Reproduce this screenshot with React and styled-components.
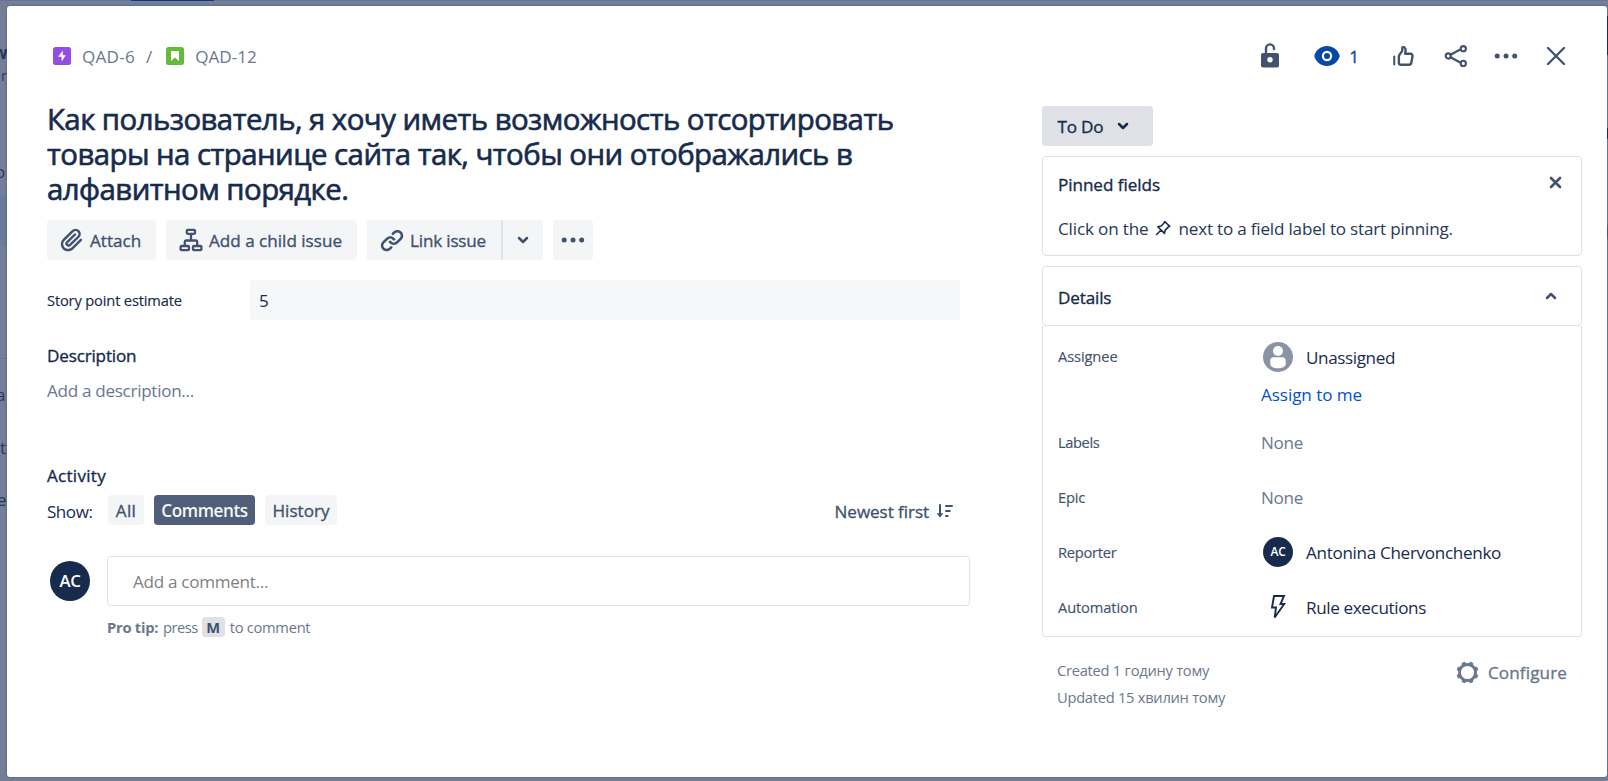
import React from "react";
import styled, { createGlobalStyle } from "styled-components";

const color = {
  navy: "#172b4d",
  slate: "#42526e",
  mute: "#6b778c",
  line: "#dfe1e6",
  chip: "#f4f5f7",
  link: "#0052cc",
};

const GlobalStyle = createGlobalStyle`
  * { box-sizing: border-box; }
  body {
    margin: 0;
    overflow: hidden;
    font-family: "Open Sans", "Noto Sans", sans-serif;
    font-size: 17.1px;
    line-height: 24px;
    color: ${color.navy};
  }
`;

/* ---------- shell ---------- */

const Screen = styled.div`
  display: grid;
  grid-template-columns: 7px 1600px 1px;
  grid-template-rows: 6px 771px 4px;
  width: 1608px;
  height: 781px;
  background: #737f98;
`;

const TopStrip = styled.div`
  grid-column: 1 / -1;
  display: flex;
  align-items: flex-start;
  padding-left: 131px;
  border-top: 1px solid #67748e;
`;

const ActiveTab = styled.div`
  width: 83px;
  height: 1px;
  margin-top: -1px;
  background: #0a3a8a;
`;

const Board = styled.div`
  overflow: hidden;
  padding-top: 37px;
  color: #27395a;
`;

const Peek = styled.div`
  height: 20px;
  line-height: 20px;
  width: 40px;
  margin-top: ${(p) => p.$gap || 0}px;
  margin-left: ${(p) => p.$shift || 0}px;
  font-weight: ${(p) => (p.$strong ? 700 : 400)};
  font-size: ${(p) => p.$size || 17}px;
`;

const Band = styled.div`
  height: 50px;
  margin-top: 14px;
  background: #687b98;
`;

const Rule = styled.div`
  height: 1px;
  margin-top: 112px;
  background: #67748e;
`;

const Edge = styled.div`
  padding-top: 10px;
  background: #67728d;
`;

const EdgeMark = styled.div`
  height: ${(p) => p.$h}px;
  margin-bottom: ${(p) => p.$after || 0}px;
  background: ${(p) => (p.$soft ? "#4c5976" : "#1b2d4c")};
`;

const Modal = styled.main`
  padding: 30px 25px 0 40px;
  background: #fff;
  border-radius: 3px;
  box-shadow: 0 0 3px rgba(9, 30, 66, 0.35);
`;

/* ---------- text ---------- */

const Text = styled.span`
  display: block;
  padding-top: ${(p) => (p.$small ? 0 : 2)}px;
  white-space: nowrap;
  color: ${(p) => p.$color || "inherit"};
  font-size: ${(p) => (p.$small ? 14.7 : 17.1)}px;
  letter-spacing: ${(p) => p.$ls || 0}px;
  -webkit-text-stroke: ${(p) => (p.$medium ? (p.$small ? 0.15 : 0.35) : 0)}px;
`;

const Bold = styled(Text)`
  font-weight: ${(p) => (p.$small ? 700 : 600)};
`;

const Title = styled.h1`
  margin: 0;
  padding-top: 1px;
  font-size: 29.4px;
  line-height: 35px;
  font-weight: 400;
  letter-spacing: -0.55px;
  white-space: nowrap;
  -webkit-text-stroke: 0.65px;
`;

/* ---------- header ---------- */

const Header = styled.header`
  display: flex;
  justify-content: space-between;
  align-items: center;
  height: 40px;
`;

const Crumbs = styled.nav`
  display: flex;
  align-items: center;
  padding-left: 6px;
  color: ${color.mute};
`;

const CrumbText = styled(Text)`
  margin: 0 ${(p) => p.$right || 0}px 0 ${(p) => p.$left || 0}px;
`;

const TypeTile = styled.span`
  display: grid;
  place-items: center;
  width: 18px;
  height: 18px;
  border-radius: 2.5px;
  background: ${(p) => p.$bg};
`;

const Actions = styled.div`
  display: flex;
  align-items: center;
  gap: 20px;
  padding-right: 11px;
  color: ${color.slate};
`;

const Watch = styled.div`
  display: flex;
  align-items: center;
  gap: 9px;
  margin: 0 9px 0 9px;
  color: #0747a6;
`;

const Vote = styled.div`
  display: flex;
  margin-right: 3px;
`;

/* ---------- columns ---------- */

const Columns = styled.div`
  display: grid;
  grid-template-columns: 923px 540px;
  justify-content: space-between;
  padding-top: 25px;
`;

const Toolbar = styled.div`
  display: flex;
  gap: 10px;
  margin-top: 13px;
`;

const ToolButton = styled.button`
  display: flex;
  align-items: center;
  gap: 3px;
  width: ${(p) => p.$w}px;
  height: 40px;
  padding: 0 0 0 ${(p) => (p.$center ? 0 : 10)}px;
  justify-content: ${(p) => (p.$center ? "center" : "flex-start")};
  border: 0;
  border-radius: ${(p) => p.$radius || "3.75px"};
  background: ${color.chip};
  color: ${color.slate};
  font: inherit;
`;

const SplitButton = styled.div`
  display: flex;
  gap: 2px;
  border-radius: 3.75px;
  background: ${color.line};
`;

const FieldRow = styled.div`
  display: flex;
  align-items: center;
  margin-top: 20px;
`;

const FieldLabel = styled.div`
  width: 203px;
`;

const FieldValue = styled.div`
  display: flex;
  align-items: center;
  width: 710px;
  height: 40px;
  padding-left: 9px;
  border-radius: 3.75px;
  background: #f6f7f9;
`;

const Section = styled.section`
  display: flex;
  flex-direction: column;
  gap: 9px;
  margin-top: 22px;
`;

const Activity = styled.section`
  margin-top: 59px;
`;

const FilterRow = styled.div`
  display: flex;
  align-items: center;
  height: 30px;
  margin-top: 7px;
`;

const FilterLabel = styled.div`
  width: 61px;
  padding-top: 2px;
`;

const Filter = styled.button`
  display: grid;
  place-items: center;
  width: ${(p) => p.$w}px;
  height: 30px;
  margin-right: 10px;
  padding: 0;
  border: 0;
  border-radius: 3.75px;
  background: ${(p) => (p.$on ? "#505f79" : color.chip)};
  color: ${(p) => (p.$on ? "#f4f5f7" : color.slate)};
  font: inherit;
`;

const Sort = styled.div`
  display: flex;
  align-items: center;
  gap: 7px;
  margin-left: auto;
  padding: 2px 17px 0 0;
  color: ${color.slate};
`;

const Composer = styled.div`
  display: flex;
  align-items: center;
  margin-top: 31px;
  padding-left: 3px;
`;

const Avatar = styled.span`
  display: grid;
  place-items: center;
  flex: none;
  width: ${(p) => p.$size}px;
  height: ${(p) => p.$size}px;
  border-radius: 50%;
  background: ${color.navy};
  color: #fff;
  font-weight: 600;
  font-size: ${(p) => p.$font}px;
  letter-spacing: -0.3px;
`;

const CommentBox = styled.div`
  display: flex;
  align-items: center;
  width: 863px;
  height: 50px;
  margin-left: 17px;
  padding-left: 25px;
  border: 1px solid ${color.line};
  border-radius: 3.75px;
`;

const Tip = styled.div`
  display: flex;
  align-items: center;
  height: 20px;
  margin: 11px 0 0 60px;
  color: ${color.mute};
`;

const TipLead = styled(Bold)`
  width: 56px;
`;

const Key = styled.kbd`
  display: grid;
  place-items: center;
  width: 23px;
  height: 20px;
  margin: 0 5px 0 4px;
  border-radius: 3.75px;
  background: ${color.line};
  color: ${color.slate};
  font: 700 14.7px/20px "Open Sans", sans-serif;
`;

const Side = styled.aside`
  padding-top: 5px;
`;

const Status = styled.button`
  display: flex;
  align-items: center;
  gap: 14px;
  width: 111px;
  height: 40px;
  padding: 0 0 0 15.5px;
  border: 0;
  border-radius: 3.75px;
  background: ${color.line};
  color: ${color.navy};
  font: inherit;
`;

const Pinned = styled.section`
  height: 100px;
  margin-top: 10px;
  padding: 14px 19px 0 15px;
  border: 1px solid ${color.line};
  border-radius: 4px;
`;

const PinnedHead = styled.div`
  display: flex;
  justify-content: space-between;
  align-items: center;
`;

const Dismiss = styled.span`
  display: flex;
  padding-bottom: 4px;
  color: ${color.slate};
`;

const PinnedHint = styled.div`
  display: flex;
  align-items: center;
  margin-top: 18px;
  color: #253858;
`;

const HintIcon = styled.span`
  display: flex;
  margin: 0 7px 0 7px;
  color: ${color.navy};
`;

const DetailsHead = styled.div`
  display: flex;
  justify-content: space-between;
  align-items: center;
  height: 60px;
  margin-top: 10px;
  padding: 2px 24px 0 15px;
  border: 1px solid ${color.line};
  border-radius: 4px;
`;

const Collapse = styled.span`
  display: flex;
  padding-bottom: 2px;
  color: ${color.slate};
`;

const DetailsBody = styled.div`
  height: 311px;
  padding-left: 15px;
  border: 1px solid ${color.line};
  border-top: 0;
  border-radius: 0 0 4px 4px;
`;

const DetailRow = styled.div`
  display: grid;
  grid-template-columns: 203px 1fr;
  align-items: ${(p) => (p.$tall ? "start" : "center")};
  height: ${(p) => (p.$tall ? 88 : 55)}px;
  padding-top: ${(p) => (p.$tall ? 16 : 0)}px;
`;

const DetailLabel = styled(Text)`
  line-height: ${(p) => (p.$tall ? 29 : 24)}px;
`;

const Person = styled.div`
  display: flex;
  align-items: center;
  gap: 13px;
  height: 30px;
  padding-left: 2px;
`;

const Assign = styled.a`
  display: block;
  margin-top: 9px;
  color: ${color.link};
`;

const Footer = styled.footer`
  display: flex;
  justify-content: space-between;
  align-items: flex-start;
  margin-top: 20px;
  padding: 0 15px;
  color: ${color.mute};
`;

const Dates = styled.div`
  line-height: 27px;
`;

const Configure = styled.div`
  display: flex;
  align-items: center;
  gap: 9px;
  height: 30px;
`;

/* ---------- icons ---------- */

const Icon = ({ w = 30, h = w, box, children }) => (
  <svg width={w} height={h} viewBox={box || `0 0 ${w} ${h}`} fill="none" stroke="currentColor" strokeLinecap="round" strokeLinejoin="round">
    {children}
  </svg>
);

const Unlock = () => (
  <Icon>
    <rect x="6" y="12" width="18" height="14.500" rx="2" fill="currentColor" stroke="none" />
    <path d="M11 11.500V7.400a4 4 0 0 1 8 0v.6" strokeWidth="2.400" />
    <circle cx="15" cy="18.800" r="2.700" fill="#fff" stroke="none" />
  </Icon>
);

const Eye = () => (
  <Icon w={26} h={20}>
    <path d="M13 0C7 0 2.600 3.600.7 8.400a4.200 4.200 0 0 0 0 3.200C2.600 16.400 7 20 13 20s10.400-3.600 12.300-8.400a4.200 4.200 0 0 0 0-3.200C23.400 3.600 19 0 13 0z" fill="currentColor" stroke="none" />
    <circle cx="13" cy="10" r="4.100" stroke="#fff" strokeWidth="2.200" />
  </Icon>
);

const Thumb = () => (
  <Icon box="0 0 24 24">
    <path d="M5 12.300v6.500" strokeWidth="1.600" />
    <path d="M8.700 17.500v-5c0-.6.2-1 .5-1.500l2.200-3.100V5.700c0-.7.9-1.100 1.700-.6.700.5 1.100 1.300 1 2.100l-.4 3h4.200c1.100 0 1.900.9 1.700 2l-.9 5c-.2 1.100-1 1.800-2 1.800h-6.100c-1.100 0-1.900-.6-1.900-1.500z" strokeWidth="1.900" />
  </Icon>
);

const Share = () => (
  <Icon>
    <path d="M9.500 13.700l9.300-4.900M9.500 16.300l9.300 5" strokeWidth="2.300" />
    <circle cx="7.300" cy="15" r="2.600" strokeWidth="2.100" />
    <circle cx="22.300" cy="7.700" r="2.600" strokeWidth="2.100" />
    <circle cx="22.300" cy="22.400" r="2.600" strokeWidth="2.100" />
  </Icon>
);

const Dots = () => (
  <Icon w={30} h={30}>
    <g fill="currentColor" stroke="none">
      <circle cx="6.200" cy="15" r="2.500" />
      <circle cx="15" cy="15" r="2.500" />
      <circle cx="23.700" cy="15" r="2.500" />
    </g>
  </Icon>
);

const Close = () => (
  <Icon>
    <path d="M7 7l16 16M23 7L7 23" strokeWidth="2.300" />
  </Icon>
);

const SmallClose = () => (
  <Icon w={13}>
    <path d="M2 2l9 9M11 2l-9 9" strokeWidth="2.600" />
  </Icon>
);

const Clip = () => (
  <Icon box="0 0 24 24">
    <path
      fill="currentColor"
      stroke="none"
      d="M11.643 17.965c-1.530 1.495-4.016 1.496-5.542.004a3.773 3.773 0 01.002-5.412l7.147-6.985a2.316 2.316 0 013.223-.002c.893.873.895 2.282.004 3.153l-6.703 6.550a.653.653 0 01-.914-.008.620.620 0 010-.902l6.229-6.087a.941.941 0 000-1.353.995.995 0 00-1.384 0l-6.230 6.087a2.502 2.502 0 000 3.607 2.643 2.643 0 003.683.009l6.703-6.550a4.195 4.195 0 00-.004-5.858 4.310 4.310 0 00-6.012.002l-7.147 6.985a5.655 5.655 0 00-.001 8.118c2.290 2.237 6.013 2.237 8.307-.005l6.840-6.685a.937.937 0 000-1.353.992.992 0 00-1.384 0l-6.819 6.686z"
    />
  </Icon>
);

const Tree = () => (
  <Icon>
    <g strokeWidth="2.300">
      <rect x="10.800" y="4.800" width="8.200" height="4" rx="1" />
      <rect x="4.600" y="21" width="8.400" height="4.200" rx="1" />
      <rect x="17" y="21" width="8.400" height="4.200" rx="1" />
      <path d="M15 9.500v6M8.800 20.500v-3.500a1.500 1.500 0 0 1 1.500-1.500h9.400a1.500 1.500 0 0 1 1.500 1.500v3.500" />
    </g>
  </Icon>
);

const Link = () => (
  <Icon box="0 0 24 24">
    <g fill="currentColor" stroke="none">
      <path d="M12.856 5.457l-.937.920a1.002 1.002 0 000 1.437 1.047 1.047 0 001.463 0l.984-.966c.967-.950 2.542-1.135 3.602-.288a2.540 2.540 0 01.203 3.810l-2.903 2.852a2.646 2.646 0 01-3.696 0l-1.110-1.090L9 13.570l1.108 1.089c1.822 1.788 4.802 1.788 6.622 0l2.905-2.852a4.558 4.558 0 00-.357-6.820c-1.893-1.517-4.695-1.226-6.422.470" />
      <path d="M11.144 19.543l.937-.920a1.002 1.002 0 000-1.437 1.047 1.047 0 00-1.462 0l-.985.966c-.967.950-2.542 1.135-3.602.288a2.540 2.540 0 01-.203-3.810l2.903-2.852a2.646 2.646 0 013.696 0l1.110 1.090L15 11.430l-1.108-1.089c-1.822-1.788-4.802-1.788-6.622 0l-2.905 2.852a4.558 4.558 0 00.357 6.820c1.893 1.517 4.695 1.226 6.422-.470" />
    </g>
  </Icon>
);

const Chevron = ({ up }) => (
  <Icon w={12} h={8}>
    <path d={up ? "M2 6l4-4 4 4" : "M2 2l4 4 4-4"} strokeWidth="2.500" />
  </Icon>
);

const SortIcon = () => (
  <Icon w={17} h={14}>
    <path d="M4 1v11" strokeWidth="2" />
    <path d="M.5 9.300h7L4 13.300z" fill="currentColor" stroke="none" />
    <path d="M10 2h6M10 7h3.800M10 12h1.700" strokeWidth="2" />
  </Icon>
);

const Pin = () => (
  <Icon w={16}>
    <path d="M9.700 1.500l5 4.900-1.500.7-3 3-.7 3.300-6.700-6.700 3.300-.7 3-3zM5.800 10.300L1.700 14.500" strokeWidth="1.600" />
  </Icon>
);

const Bolt = () => (
  <Icon w={30} h={30} box="-7 -2 30 30">
    <path d="M4 2h10l-3.500 8h3.700L4.700 23.500l1.300-10H2z" strokeWidth="1.900" strokeLinejoin="miter" />
  </Icon>
);

const Gear = () => (
  <Icon w={23}>
    <circle cx="11.500" cy="11.500" r="8" strokeWidth="2.800" />
    {[22.5, 67.5, 112.5, 157.5, 202.5, 247.5, 292.5, 337.5].map((a) => (
      <path key={a} d="M9.300 3.200l.7-2.400h3l.7 2.400z" fill="currentColor" strokeWidth=".6" transform={`rotate(${a} 11.5 11.5)`} />
    ))}
  </Icon>
);

const Nobody = () => (
  <Icon>
    <circle cx="15" cy="15" r="15" fill="#8993a4" stroke="none" />
    <circle cx="15" cy="9" r="5" fill="#fff" stroke="none" />
    <path d="M7.300 18.500c0-2 1.200-3.300 3.200-3.300h9c2 0 3.200 1.300 3.200 3.300v3.800c0 2.500-4 4-7.700 4s-7.700-1.500-7.700-4z" fill="#fff" stroke="none" />
  </Icon>
);

/* ---------- page ---------- */

export default function App() {
  return (
    <Screen>
      <GlobalStyle />
      <TopStrip><ActiveTab /></TopStrip>
      <Board>
        <Peek $strong $shift={-7}>w</Peek>
        <Peek $gap={3} $shift={1} $size={14}>re</Peek>
        <Peek $gap={76} $shift={-5}>o</Peek>
        <Band />
        <Rule />
        <Peek $gap={26} $shift={-4}>a</Peek>
        <Peek $gap={33}>te</Peek>
        <Peek $gap={32} $shift={-3}>ef</Peek>
      </Board>

      <Modal>
        <Header>
          <Crumbs>
            <TypeTile $bg="#904ee2">
              <Icon w={10} h={12}>
                <path d="M5.800.5L1.200 6.800h3.400v4.700l4.200-6.300H5.800z" fill="#fff" stroke="none" />
              </Icon>
            </TypeTile>
            <CrumbText $left={11} $right={11} $ls={0.24}>QAD-6</CrumbText>
            <CrumbText $right={14}>/</CrumbText>
            <TypeTile $bg="#63ba3c">
              <Icon w={8} h={10}>
                <path d="M0 1a1 1 0 0 1 1-1h6a1 1 0 0 1 1 1v9L4 6.500 0 10z" fill="#fff" stroke="none" />
              </Icon>
            </TypeTile>
            <CrumbText $left={11} $ls={0}>QAD-12</CrumbText>
          </Crumbs>
          <Actions>
            <Unlock />
            <Watch>
              <Eye />
              <Text $medium>1</Text>
            </Watch>
            <Vote><Thumb /></Vote>
            <Share />
            <Dots />
            <Close />
          </Actions>
        </Header>

        <Columns>
          <div>
            <Title>
              Как пользователь, я хочу иметь возможность отсортировать<br />
              товары на странице сайта так, чтобы они отображались в<br />
              алфавитном порядке.
            </Title>
            <Toolbar>
              <ToolButton $w={109}><Clip /><Text $medium>Attach</Text></ToolButton>
              <ToolButton $w={191}><Tree /><Text $medium>Add a child issue</Text></ToolButton>
              <SplitButton>
                <ToolButton $w={134} $radius="3.75px 0 0 3.75px"><Link /><Text $medium $ls={-0.18}>Link issue</Text></ToolButton>
                <ToolButton $w={40} $center $radius="0 3.75px 3.75px 0"><Chevron /></ToolButton>
              </SplitButton>
              <ToolButton $w={40} $center><Dots /></ToolButton>
            </Toolbar>
            <FieldRow>
              <FieldLabel><Text $small $medium $ls={-0.17}>Story point estimate</Text></FieldLabel>
              <FieldValue><Text>5</Text></FieldValue>
            </FieldRow>
            <Section>
              <Text $medium $ls={-0.17}>Description</Text>
              <Text $color={color.mute} $ls={-0.3}>Add a description...</Text>
            </Section>
            <Activity>
              <Text $medium $ls={0.26}>Activity</Text>
              <FilterRow>
                <FilterLabel><Text $ls={-0.5}>Show:</Text></FilterLabel>
                <Filter $w={36}><Text $medium $ls={0.35}>All</Text></Filter>
                <Filter $w={101} $on><Bold $ls={-0.4}>Comments</Bold></Filter>
                <Filter $w={72}><Text $medium>History</Text></Filter>
                <Sort><Text $medium $ls={-0.07}>Newest first</Text><SortIcon /></Sort>
              </FilterRow>
              <Composer>
                <Avatar $size={40} $font={16.8}>AC</Avatar>
                <CommentBox><Text $color="#7f7f7f" $ls={-0.3}>Add a comment...</Text></CommentBox>
              </Composer>
              <Tip>
                <TipLead $small $ls={-0.25}>Pro tip:</TipLead>
                <Text $small $ls={-0.5}>press</Text>
                <Key>M</Key>
                <Text $small $ls={-0.29}>to comment</Text>
              </Tip>
            </Activity>
          </div>

          <Side>
            <Status><Text $medium $ls={-0.2}>To Do</Text><Chevron /></Status>
            <Pinned>
              <PinnedHead><Text $medium $ls={-0.05}>Pinned fields</Text><Dismiss><SmallClose /></Dismiss></PinnedHead>
              <PinnedHint>
                <Text $ls={-0.16}>Click on the</Text>
                <HintIcon><Pin /></HintIcon>
                <Text $ls={-0.2}>next to a field label to start pinning.</Text>
              </PinnedHint>
            </Pinned>
            <DetailsHead><Text $medium $ls={-0.15}>Details</Text><Collapse><Chevron up /></Collapse></DetailsHead>
            <DetailsBody>
              <DetailRow $tall>
                <DetailLabel $tall $small $medium $color={color.slate} $ls={-0.12}>Assignee</DetailLabel>
                <div>
                  <Person><Nobody /><Text $ls={-0.39}>Unassigned</Text></Person>
                  <Assign><Text $ls={-0.07}>Assign to me</Text></Assign>
                </div>
              </DetailRow>
              <DetailRow>
                <DetailLabel $small $medium $color={color.slate} $ls={-0.4}>Labels</DetailLabel>
                <Text $color={color.mute} $ls={-0.31}>None</Text>
              </DetailRow>
              <DetailRow>
                <DetailLabel $small $medium $color={color.slate} $ls={-0.2}>Epic</DetailLabel>
                <Text $color={color.mute} $ls={-0.31}>None</Text>
              </DetailRow>
              <DetailRow>
                <DetailLabel $small $medium $color={color.slate} $ls={-0.27}>Reporter</DetailLabel>
                <Person><Avatar $size={30} $font={12}>AC</Avatar><Text $ls={-0.32}>Antonina Chervonchenko</Text></Person>
              </DetailRow>
              <DetailRow>
                <DetailLabel $small $medium $color={color.slate} $ls={-0.14}>Automation</DetailLabel>
                <Person><Bolt /><Text $ls={-0.37}>Rule executions</Text></Person>
              </DetailRow>
            </DetailsBody>
            <Footer>
              <Dates>
                <Text $small $ls={-0.26}>Created 1 годину тому</Text>
                <Text $small $ls={-0.27}>Updated 15 хвилин тому</Text>
              </Dates>
              <Configure><Gear /><Text $medium $ls={0.12}>Configure</Text></Configure>
            </Footer>
          </Side>
        </Columns>
      </Modal>
      <Edge>
        <EdgeMark $h={39} $after={73} />
        <EdgeMark $h={11} $after={86} />
        <EdgeMark $h={14} $soft />
      </Edge>
    </Screen>
  );
}
